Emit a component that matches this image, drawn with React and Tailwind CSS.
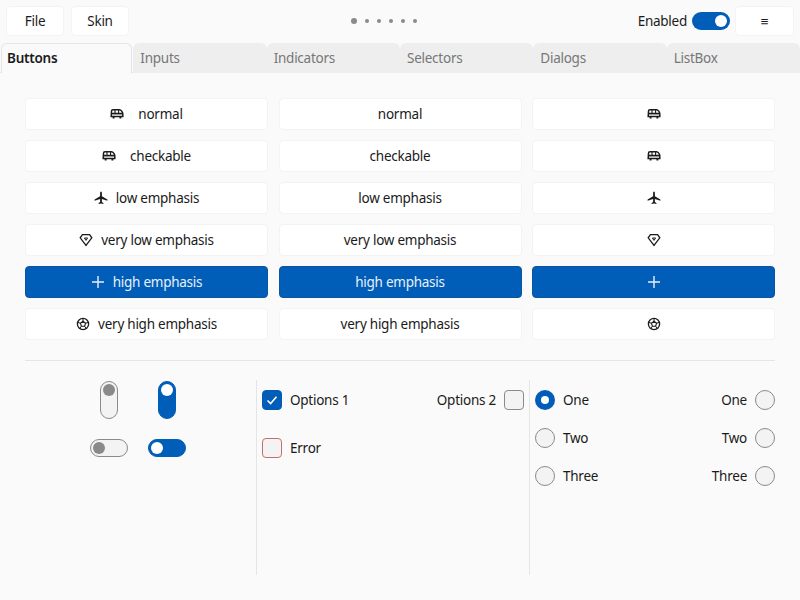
import { Fragment } from 'react';

const BLUE = 'bg-[#005eb8]';

const BusIcon = () => (
    <svg width="14" height="14" viewBox="0 0 14 14" fill="none" stroke="currentColor" strokeWidth="1.5">
        <path d="M1.5 4.2 C1.5 3.2 2.2 2.8 3 2.8 H9.5 C11 2.8 12.8 5 12.8 7 V9.6 H1.2 Z" />
        <path d="M1.2 6.6 H12.6" strokeWidth="1.7" />
        <path d="M5 3 V6.5 M8.6 3 V6.5" strokeWidth="1.1" />
        <path d="M3.6 9.8 V11.4 M10.4 9.8 V11.4" strokeWidth="1.9" />
    </svg>
);

const PlaneIcon = () => (
    <svg width="14" height="14" viewBox="0 0 14 14" fill="currentColor">
        <path d="M7 .6 C7.6 .6 7.9 1.4 7.9 2.2 V5.2 L13.4 8.4 V9.7 L7.9 8 V11 L9.4 12.1 V13.1 L7 12.5 L4.6 13.1 V12.1 L6.1 11 V8 L.6 9.7 V8.4 L6.1 5.2 V2.2 C6.1 1.4 6.4 .6 7 .6 Z" />
    </svg>
);

const GemIcon = () => (
    <svg width="14" height="14" viewBox="0 0 14 14" fill="none" stroke="currentColor" strokeWidth="1.3">
        <path d="M3.4 1.6 H10.6 L12.8 4.8 L7 12.4 L1.2 4.8 Z" />
        <path d="M5.4 5 H8.6 L7 7.4 Z" strokeWidth="1" />
    </svg>
);

const BallIcon = () => (
    <svg width="14" height="14" viewBox="0 0 14 14" fill="none" stroke="currentColor" strokeWidth="1.3">
        <circle cx="7" cy="7" r="5.6" />
        <path d="M7 4.3 L9.6 6.2 L8.6 9.2 H5.4 L4.4 6.2 Z" strokeWidth="1.1" />
        <path d="M7 1.5 V4.3 M12.3 5.4 L9.6 6.2 M10.4 11.6 L8.6 9.2 M3.6 11.6 L5.4 9.2 M1.7 5.4 L4.4 6.2" strokeWidth="1" />
    </svg>
);

const PlusIcon = () => (
    <svg width="14" height="14" viewBox="0 0 14 14" fill="none" stroke="currentColor" strokeWidth="1.4">
        <path d="M7 1 V13 M1 7 H13" />
    </svg>
);

const rows = [
    { label: 'normal', icon: BusIcon, gap: 'gap-[14px]' },
    { label: 'checkable', icon: BusIcon, gap: 'gap-[14px]' },
    { label: 'low emphasis', icon: PlaneIcon, gap: 'gap-[8px]' },
    { label: 'very low emphasis', icon: GemIcon, gap: 'gap-[8px]' },
    { label: 'high emphasis', icon: PlusIcon, gap: 'gap-[8px]', high: true },
    { label: 'very high emphasis', icon: BallIcon, gap: 'gap-[8px]' },
];

const tabs = ['Buttons', 'Inputs', 'Indicators', 'Selectors', 'Dialogs', 'ListBox'];

const Btn = ({ high, gap, children }) => (
    <button
        className={`h-[32px] flex items-center justify-center rounded-[4px] ${gap} ${
            high
                ? 'bg-[#005eb8] border border-[#0a559f] text-[#e8f0fa]'
                : 'bg-white border border-[#f3f3f3] text-[#1b1b1b]'
        }`}
    >
        {children}
    </button>
);

const Toggle = ({ on, vertical }) => {
    const size = vertical ? 'w-[18px] h-[38px]' : 'w-[38px] h-[18px]';
    const align = vertical ? 'flex-col items-center' : 'items-center';
    const skin = on ? 'bg-[#005eb8] border-[#005eb8]' : 'bg-[#f3f3f3] border-[#8a8a8a]';
    return (
        <div className={`${size} ${align} ${skin} flex rounded-full border p-[2px]`}>
            <span className={`w-[12px] h-[12px] rounded-full ${on ? 'bg-white' : 'bg-[#8a8a8a]'}`} />
        </div>
    );
};

const Check = ({ on, error }) => (
    <span
        className={`w-[20px] h-[20px] rounded-[4px] border flex items-center justify-center ${
            on
                ? 'bg-[#005eb8] border-[#005eb8]'
                : error
                  ? 'bg-[#f3f3f3] border-[#cc6b6b]'
                  : 'bg-[#f3f3f3] border-[#8a8a8a]'
        }`}
    >
        {on && (
            <svg width="14" height="14" viewBox="0 0 14 14" fill="none" stroke="white" strokeWidth="1.6">
                <path d="M2.5 7.5 L5.6 10.5 L11.5 3.8" />
            </svg>
        )}
    </span>
);

const Radio = ({ on }) =>
    on ? (
        <span className="w-[20px] h-[20px] rounded-full bg-[#005eb8] flex items-center justify-center">
            <span className="w-[8px] h-[8px] rounded-full bg-white" />
        </span>
    ) : (
        <span className="w-[20px] h-[20px] rounded-full bg-[#f3f3f3] border border-[#8a8a8a]" />
    );

const App = () => {
    return (
        <div className="w-[800px] h-[600px] bg-[#fafafa] flex flex-col overflow-hidden text-[13.5px] tracking-[-0.25px] text-[#1b1b1b] font-['Noto_Sans',sans-serif]">
            <div className="h-[43px] shrink-0 flex items-start pt-[6px] px-[6px]">
                <button className="w-[58px] h-[30px] bg-white rounded-[4px] border border-[#f3f3f3]">File</button>
                <button className="w-[58px] h-[30px] ml-[7px] bg-white rounded-[4px] border border-[#f3f3f3]">Skin</button>
                <div className="ml-[222px] h-[30px] flex items-center gap-[8px]">
                    <span className="w-[6px] h-[6px] rounded-full bg-[#8a8a8a]" />
                    <span className="w-[4px] h-[4px] rounded-full bg-[#8a8a8a]" />
                    <span className="w-[4px] h-[4px] rounded-full bg-[#8a8a8a]" />
                    <span className="w-[4px] h-[4px] rounded-full bg-[#8a8a8a]" />
                    <span className="w-[4px] h-[4px] rounded-full bg-[#8a8a8a]" />
                    <span className="w-[4px] h-[4px] rounded-full bg-[#8a8a8a]" />
                </div>
                <div className="ml-auto h-[30px] flex items-center gap-[5px]">
                    <span>Enabled</span>
                    <div className={`w-[38px] h-[18px] rounded-full ${BLUE} flex items-center justify-end pr-[3px]`}>
                        <span className="w-[12px] h-[12px] rounded-full bg-white" />
                    </div>
                    <button className="w-[59px] h-[30px] bg-white rounded-[4px] border border-[#f3f3f3]">≡</button>
                </div>
            </div>

            <div className="h-[30px] shrink-0 flex border-b border-[#e5e5e5]">
                {tabs.map((tab, i) => (
                    <div
                        key={tab}
                        className={`h-[30px] flex items-center rounded-t-[6px] ${
                            i === 0
                                ? 'w-[131.33px] mx-[1px] pl-[5px] bg-[#fafafa] border border-b-0 border-[#e5e5e5] font-semibold text-[#1b1b1b]'
                                : 'w-[133.33px] pl-[7px] bg-[#eeeeee] text-[#777777]'
                        }`}
                    >
                        {tab}
                    </div>
                ))}
            </div>

            <div className="px-[25px] pt-[25px] flex-1 flex flex-col">
                <div className="grid grid-cols-[243px_243px_243px] gap-x-[10.5px] gap-y-[10px]">
                    {rows.map((row) => (
                        <Fragment key={row.label}>
                            <Btn high={row.high} gap={row.gap}>
                                <row.icon />
                                <span>{row.label}</span>
                            </Btn>
                            <Btn high={row.high} gap="">
                                {row.label}
                            </Btn>
                            <Btn high={row.high} gap="">
                                <row.icon />
                            </Btn>
                        </Fragment>
                    ))}
                </div>

                <div className="mt-[20px] border-t border-[#e5e5e5]" />

                <div className="mt-[19px] flex h-[195px]">
                    <div className="w-[231px] pl-[65px] flex flex-col gap-[20px] pt-[1px]">
                        <div className="flex gap-[20px]">
                            <div className="w-[38px] flex justify-center">
                                <Toggle vertical />
                            </div>
                            <div className="w-[38px] flex justify-center">
                                <Toggle vertical on />
                            </div>
                        </div>
                        <div className="flex gap-[20px]">
                            <Toggle />
                            <Toggle on />
                        </div>
                    </div>

                    <div className="w-[273px] border-l border-[#e5e5e5] px-[5px] pt-[4px] flex flex-col gap-[16px]">
                        <div className="h-[32px] flex items-center gap-[8px]">
                            <Check on />
                            <span>Options 1</span>
                            <span className="ml-auto">Options 2</span>
                            <Check />
                        </div>
                        <div className="h-[32px] flex items-center gap-[8px]">
                            <Check error />
                            <span>Error</span>
                        </div>
                    </div>

                    <div className="flex-1 border-l border-[#e5e5e5] pl-[5px] pt-[10px] flex flex-col gap-[18px]">
                        {['One', 'Two', 'Three'].map((label, i) => (
                            <div key={label} className="h-[20px] flex items-center gap-[8px]">
                                <Radio on={i === 0} />
                                <span>{label}</span>
                                <span className="ml-auto">{label}</span>
                                <Radio />
                            </div>
                        ))}
                    </div>
                </div>
            </div>
        </div>
    );
};

export default App;
